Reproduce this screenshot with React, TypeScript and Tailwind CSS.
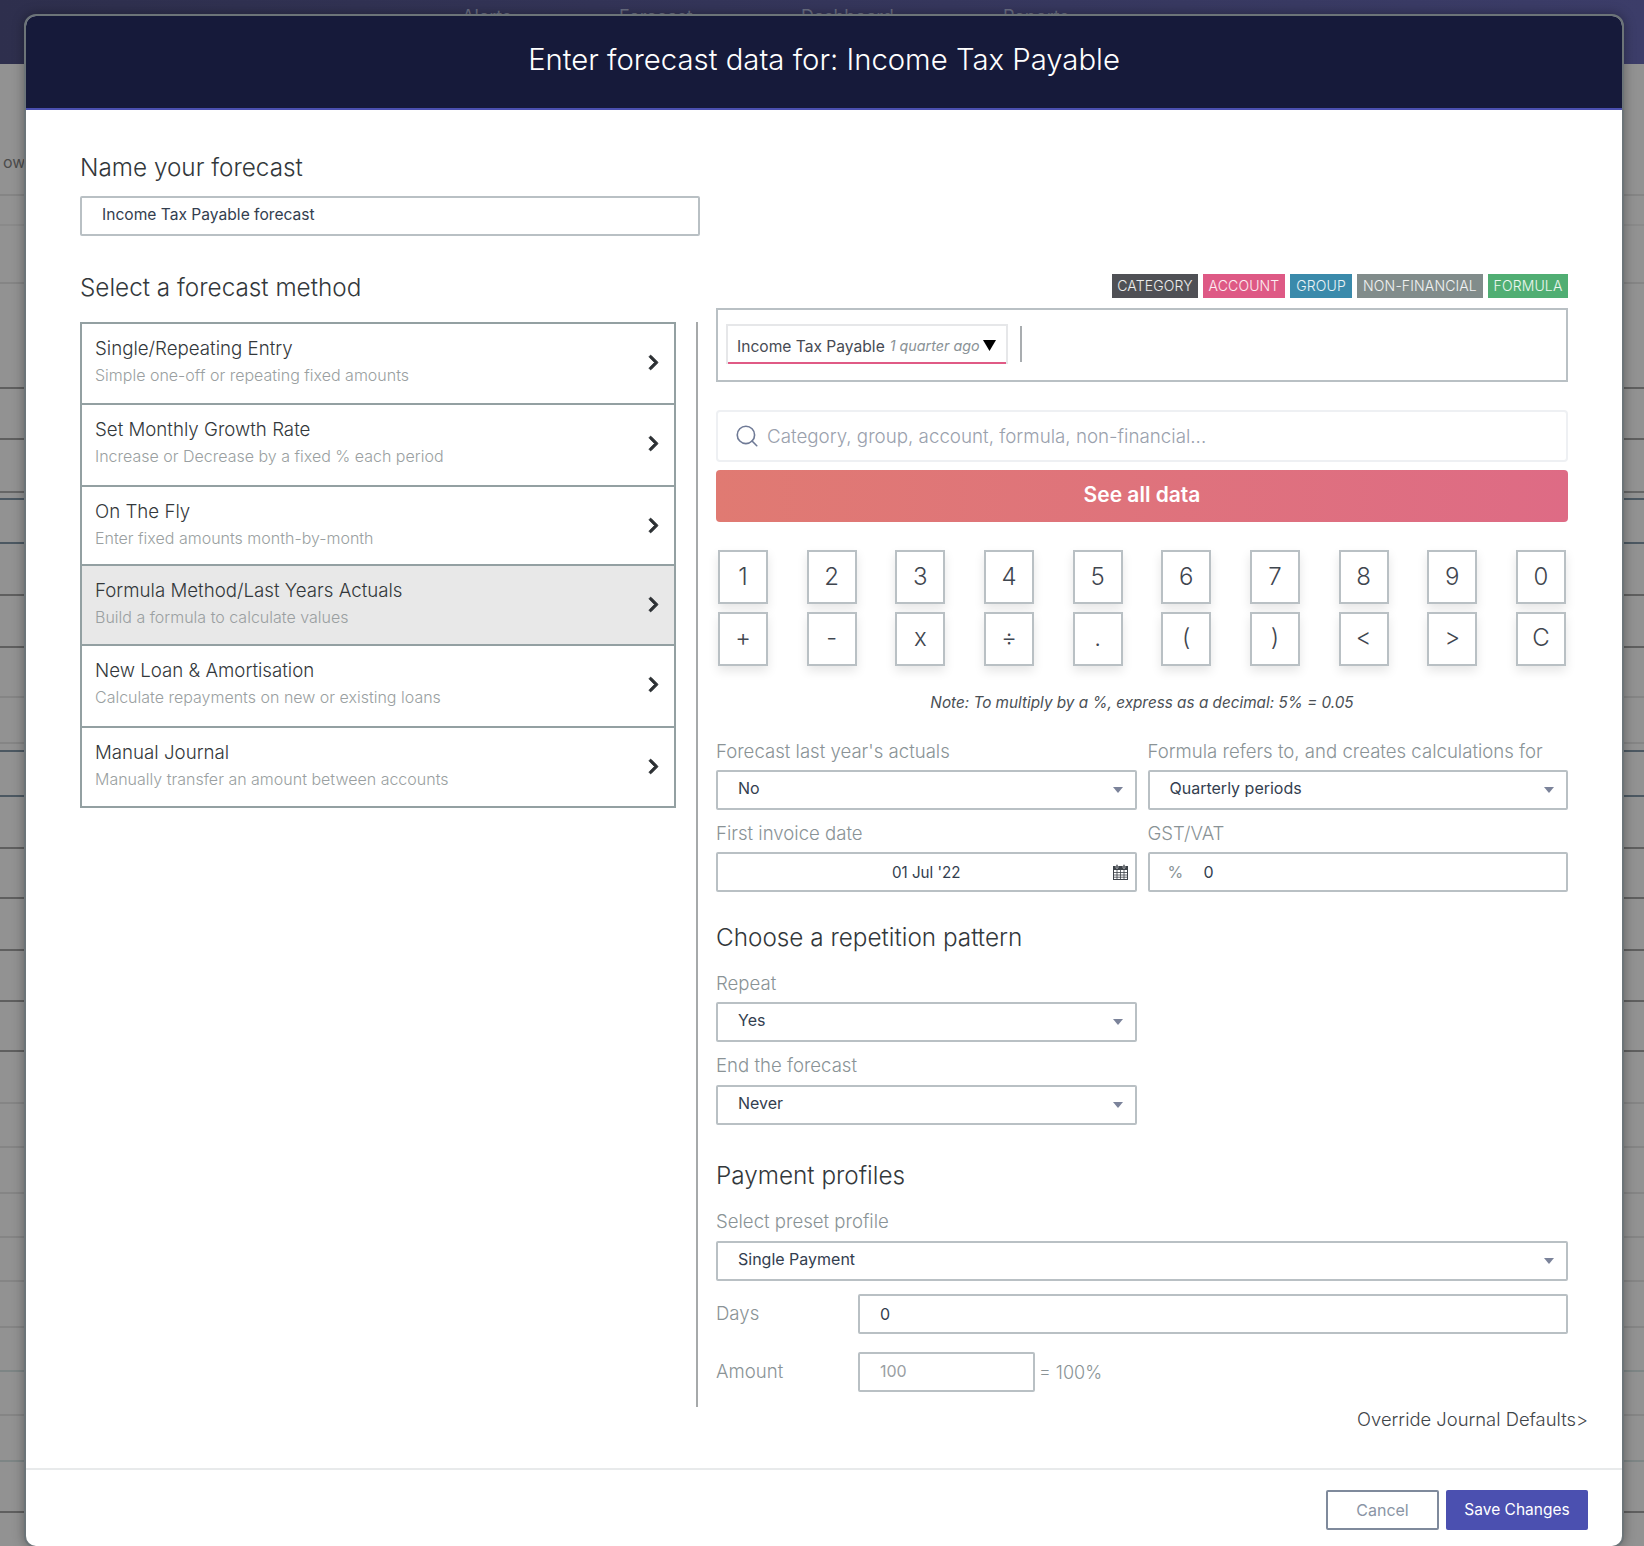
import React from 'react';
import { Search } from 'lucide-react';
import { FaChevronRight } from 'react-icons/fa';

const methods = [
  { title: 'Single/Repeating Entry', sub: 'Simple one-off or repeating fixed amounts', height: 'h-[81px]' },
  { title: 'Set Monthly Growth Rate', sub: 'Increase or Decrease by a fixed % each period', height: 'h-[82px]' },
  { title: 'On The Fly', sub: 'Enter fixed amounts month-by-month', height: 'h-[79px]' },
  { title: 'Formula Method/Last Years Actuals', sub: 'Build a formula to calculate values', height: 'h-[80px]', active: true },
  { title: 'New Loan & Amortisation', sub: 'Calculate repayments on new or existing loans', height: 'h-[82px]' },
  { title: 'Manual Journal', sub: 'Manually transfer an amount between accounts', height: 'h-[78px]', last: true }
];

const tags = [
  { label: 'CATEGORY', color: 'bg-[#4f5055] w-[86px]' },
  { label: 'ACCOUNT', color: 'bg-[#de5985] w-[82px]' },
  { label: 'GROUP', color: 'bg-[#3a8aab] w-[62px]' },
  { label: 'NON-FINANCIAL', color: 'bg-[#818c8b] w-[126px]' },
  { label: 'FORMULA', color: 'bg-[#50ae73] w-[80px]' }
];

const keyRows = [
  ['1', '2', '3', '4', '5', '6', '7', '8', '9', '0'],
  ['+', '-', 'x', '÷', '.', '(', ')', '<', '>', 'C']
];

// lines of the table behind the dialog, both sides use the same ones
const backLines = [
  { y: 194, color: 'bg-[#858585]' },
  { y: 224, color: 'bg-[#8a8a8a]' },
  { y: 282, color: 'bg-[#858585]' },
  { y: 387, color: 'bg-[#5f5f5f]' },
  { y: 438, color: 'bg-[#5f5f5f]' },
  { y: 491, color: 'bg-[#666666]' },
  { y: 498, color: 'bg-[#4c5862]' },
  { y: 542, color: 'bg-[#4c5862]' },
  { y: 594, color: 'bg-[#5f5f5f]' },
  { y: 646, color: 'bg-[#5f5f5f]' },
  { y: 696, color: 'bg-[#858585]' },
  { y: 742, color: 'bg-[#858585]' },
  { y: 750, color: 'bg-[#4c5862]' },
  { y: 795, color: 'bg-[#4c5862]' },
  { y: 847, color: 'bg-[#5f5f5f]' },
  { y: 897, color: 'bg-[#5f5f5f]' },
  { y: 949, color: 'bg-[#5f5f5f]' },
  { y: 1000, color: 'bg-[#5f5f5f]' },
  { y: 1050, color: 'bg-[#5f5f5f]' },
  { y: 1102, color: 'bg-[#858585]' },
  { y: 1146, color: 'bg-[#858585]' },
  { y: 1192, color: 'bg-[#858585]' },
  { y: 1236, color: 'bg-[#858585]' },
  { y: 1280, color: 'bg-[#858585]' },
  { y: 1326, color: 'bg-[#858585]' },
  { y: 1370, color: 'bg-[#7d8585]' },
  { y: 1414, color: 'bg-[#858585]' },
  { y: 1460, color: 'bg-[#7d8585]' },
  { y: 1511, color: 'bg-[#5f5f5f]' }
];

const Caret = () => (
  <svg width="10" height="6" viewBox="0 0 10 6" className="shrink-0">
    <path d="M0 0h10L5 6z" fill="#7b839a" />
  </svg>
);

const CalendarIcon = () => (
  <svg width="15" height="16" viewBox="0 0 15 16" className="shrink-0">
    <rect x="0.5" y="2.5" width="14" height="13" fill="#fff" stroke="#3d4249" />
    <rect x="0.5" y="2.5" width="14" height="3.5" fill="#3d4249" />
    <rect x="3" y="0.5" width="2" height="4" rx="1" fill="#3d4249" stroke="#fff" strokeWidth="0.5" />
    <rect x="10" y="0.5" width="2" height="4" rx="1" fill="#3d4249" stroke="#fff" strokeWidth="0.5" />
    <path d="M4 6v9M7.5 6v9M11 6v9M1 8.5h13M1 11h13M1 13.2h13" stroke="#3d4249" strokeWidth="0.8" />
  </svg>
);

const Label = ({ children }: { children: React.ReactNode }) => (
  <div className="h-[24px] text-[18.6px] leading-[23px] font-[350] text-[#8a9396]">{children}</div>
);

const SelectBox = ({ value, className = '' }: { value: string; className?: string }) => (
  <div className={`flex h-[40px] items-center justify-between rounded-[2px] border-2 border-[#b9c0c4] pl-[20px] pr-[12px] text-[16px] text-[#333e4f] ${className}`}>
    <span className="-mt-[4px]">{value}</span>
    <Caret />
  </div>
);

const Heading = ({ children }: { children: React.ReactNode }) => (
  <div className="h-[28px] text-[24.3px] leading-[26px] font-[350] text-[#33383b]">{children}</div>
);

const App = () => {
  return (
    <div className="relative h-[1546px] w-[1644px] overflow-hidden bg-[#929292] font-['Inter',sans-serif]">
      {/* dimmed page behind the dialog */}
      <div className="absolute inset-x-0 top-0 h-[64px] bg-gradient-to-r from-[#2e2f4d] to-[#3c3d69]">
        <div className="flex pl-[462px] pt-[3px] text-[18px] text-[#6a6f82]">
          <span className="w-[157px]">Alerts</span>
          <span className="w-[182px]">Forecast</span>
          <span className="w-[202px]">Dashboard</span>
          <span>Reports</span>
        </div>
      </div>
      <div className="absolute left-[3px] top-[150px] text-[16px] text-[#4c4c4c]">ow</div>
      {backLines.map(line => (
        <div key={line.y} className={`absolute inset-x-0 h-[2px] ${line.color}`} style={{ top: line.y }} />
      ))}

      <div className="relative ml-[24px] mt-[14px] h-[1534px] w-[1600px] overflow-hidden rounded-[12px] border-2 border-[#6c7478] bg-white shadow-[0_0_12px_rgba(0,0,0,0.35)]">
        <div className="flex h-[94px] items-center justify-center border-b-2 border-[#4b50b0] bg-[#161a3a] pb-[4px] text-[29.3px] font-light text-white">
          Enter forecast data for: Income Tax Payable
        </div>

        <div className="px-[54px] pt-[44px]">
          <Heading>Name your forecast</Heading>
          <div className="mt-[14px] flex h-[40px] w-[620px] items-center rounded-[2px] border-2 border-[#b9c0c4] pb-[2px] pl-[20px] text-[15.6px] text-[#333e4f]">
            Income Tax Payable forecast
          </div>

          <div className="mt-[38px] flex">
            <div className="w-[618px] shrink-0">
              <Heading>Select a forecast method</Heading>
              <div className="mt-[20px] flex">
                <div className="w-[596px] self-start border-2 border-[#93a0a2]">
                  {methods.map(m => (
                    <div
                      key={m.title}
                      className={`relative ${m.height} ${m.last ? '' : 'border-b-2 border-[#93a0a2]'} ${m.active ? 'bg-[#e8e8e8]' : 'bg-white'}`}
                    >
                      <div className="pl-[13px] pt-[12px]">
                        <div className="h-[26px] text-[18.7px] leading-[26px] font-[350] text-[#33383b]">{m.title}</div>
                        <div className="h-[26px] text-[16px] leading-[26px] font-[350] text-[#9a9fa1]">{m.sub}</div>
                      </div>
                      <FaChevronRight size={17} stroke="currentColor" strokeWidth={24} className="absolute right-[12px] top-[30px] text-[#2c3033]" />
                    </div>
                  ))}
                </div>
                <div className="ml-[20px] h-[1085px] w-[2px] bg-[#a6a9aa]" />
              </div>
            </div>

            <div className="ml-[18px] flex-1">
              <div className="flex h-[34px] items-start justify-end gap-[5px]">
                {tags.map(tag => (
                  <span key={tag.label} className={`flex h-[24px] items-center justify-center pb-[2px] text-[14px] font-[350] tracking-[0.01em] text-white/90 ${tag.color}`}>
                    {tag.label}
                  </span>
                ))}
              </div>

              <div className="flex h-[74px] items-start border-2 border-[#b9c0c4] pl-[8px] pt-[14px]">
                <div className="flex h-[40px] w-[282px] items-center border-2 border-b-0 border-[#e6e7e9] pl-[9px] pt-[3px] shadow-[inset_0_-2px_0_#e05a85]">
                  <span className="text-[15.6px] text-[#474b54]">Income Tax Payable</span>
                  <span className="ml-[5px] -mt-[1px] text-[14.3px] italic text-[#8a9296]">1 quarter ago</span>
                  <svg width="13" height="11" viewBox="0 0 13 11" className="ml-[3px] -mt-[2px]">
                    <path d="M0 0h13L6.5 11z" fill="#000" />
                  </svg>
                </div>
                <div className="ml-[12px] mt-[2px] h-[36px] w-[2px] bg-[#a9adb0]" />
              </div>

              <div className="mt-[28px] flex h-[52px] items-center gap-[7px] rounded-[4px] border-2 border-[#eef0f3] pl-[16px] text-[18.75px] font-[350] text-[#9aa1ad]">
                <Search size={26} strokeWidth={1.5} className="text-[#6f7a96]" />
                <span className="pt-[3px]">Category, group, account, formula, non-financial...</span>
              </div>

              <div className="mt-[8px] flex h-[52px] items-center justify-center rounded-[4px] bg-gradient-to-r from-[#e07a72] to-[#de6b85] pb-[2px] text-[21px] font-semibold text-white">
                See all data
              </div>

              {keyRows.map((row, i) => (
                <div key={i} className={`flex justify-between px-[2px] ${i === 0 ? 'mt-[28px]' : 'mt-[8px]'}`}>
                  {row.map(key => (
                    <div
                      key={key}
                      className={`flex h-[54px] w-[50px] items-center justify-center border-2 border-[#b9c0c4] bg-white text-[24px] font-light text-[#3f464f] shadow-[0_5px_10px_rgba(0,0,0,0.1)] ${i === 1 ? 'pb-[3px]' : ''}`}
                    >
                      {key}
                    </div>
                  ))}
                </div>
              ))}

              <div className="mt-[27px] h-[20px] text-center text-[15.3px] leading-[20px] italic text-[#4a4f55]">
                Note: To multiply by a %, express as a decimal: 5% = 0.05
              </div>

              <div className="mt-[27px] grid grid-cols-2 gap-x-[11px]">
                <div>
                  <Label>Forecast last year's actuals</Label>
                  <SelectBox value="No" className="mt-[6px]" />
                </div>
                <div>
                  <Label>Formula refers to, and creates calculations for</Label>
                  <SelectBox value="Quarterly periods" className="mt-[6px]" />
                </div>
                <div className="mt-[12px]">
                  <Label>First invoice date</Label>
                  <div className="relative mt-[6px] flex h-[40px] items-center justify-center rounded-[2px] border-2 border-[#b9c0c4] pt-[2px] text-[15.2px] text-[#333e4f]">
                    01 Jul '22
                    <span className="absolute right-[7px] top-[10px]">
                      <CalendarIcon />
                    </span>
                  </div>
                </div>
                <div className="mt-[12px]">
                  <Label>GST/VAT</Label>
                  <div className="mt-[6px] flex h-[40px] items-center rounded-[2px] border-2 border-[#b9c0c4] pl-[18px] text-[16px] text-[#333e4f]">
                    <span className="w-[36px] text-[#8a9396]">%</span>0
                  </div>
                </div>
              </div>

              <div className="mt-[32px]">
                <Heading>Choose a repetition pattern</Heading>
              </div>
              <div className="mt-[20px] w-[421px]">
                <Label>Repeat</Label>
                <SelectBox value="Yes" className="mt-[6px]" />
                <div className="mt-[12px]">
                  <Label>End the forecast</Label>
                </div>
                <SelectBox value="Never" className="mt-[7px]" />
              </div>

              <div className="mt-[37px]">
                <Heading>Payment profiles</Heading>
              </div>
              <div className="mt-[20px]">
                <Label>Select preset profile</Label>
              </div>
              <SelectBox value="Single Payment" className="mt-[7px]" />

              <div className="mt-[13px] flex items-center">
                <div className="w-[142px]">
                  <Label>Days</Label>
                </div>
                <div className="flex h-[40px] flex-1 items-center rounded-[2px] border-2 border-[#b9c0c4] pl-[20px] text-[16px] text-[#333e4f]">
                  0
                </div>
              </div>

              <div className="mt-[18px] flex items-center">
                <div className="w-[142px]">
                  <Label>Amount</Label>
                </div>
                <div className="flex h-[40px] w-[177px] items-center rounded-[2px] border-2 border-[#b9c0c4] pb-[3px] pl-[20px] text-[16px] text-[#9aa0a3]">
                  100
                </div>
                <span className="ml-[4px] text-[18px] font-[350] text-[#8a9396]">= 100%</span>
              </div>

              <div className="-mr-[20px] mt-[16px] h-[24px] text-right text-[18.4px] leading-[22px] font-[350] text-[#3f4549]">
                Override Journal Defaults&gt;
              </div>
            </div>
          </div>
        </div>

        <div className="mt-[36px] flex justify-end gap-[7px] border-t-2 border-[#e8eaeb] pr-[34px] pt-[20px] text-[16px]">
          <div className="flex h-[40px] w-[113px] items-center justify-center rounded-[2px] border-2 border-[#7f8a9c] text-[#8a95a5]">
            Cancel
          </div>
          <div className="flex h-[40px] w-[142px] items-center justify-center rounded-[2px] bg-[#4b50b0] text-[15.5px] text-white">
            Save Changes
          </div>
        </div>
      </div>
    </div>
  );
};

export default App;
